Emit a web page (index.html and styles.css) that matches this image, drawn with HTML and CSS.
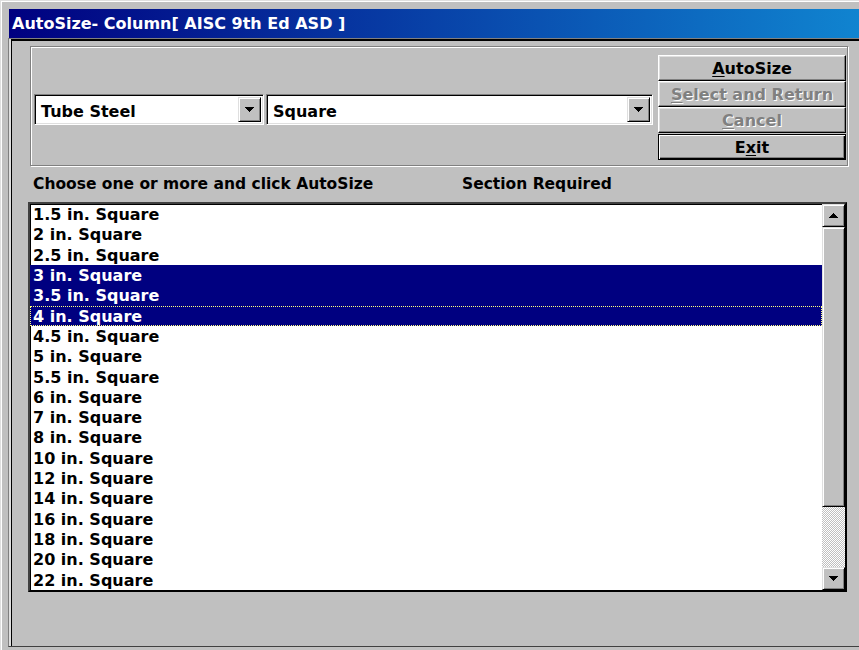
FILE: index.html
```html
<!DOCTYPE html>
<html lang="en">
<head>
<meta charset="utf-8">
<title>AutoSize- Column</title>
<link rel="stylesheet" href="styles.css">
</head>
<body>
<div class="window">
  <div class="titlebar"><span class="title">AutoSize- Column[ AISC 9th Ed ASD ]</span></div>
  <div class="client">
    <div class="panel">
      <div class="combos">
        <div class="combo combo-type">
          <span class="combo-value">Tube Steel</span>
          <span class="arrow-btn"><svg width="9" height="5" viewBox="0 0 9 5" shape-rendering="crispEdges"><path d="M0 0h9v1h-1v1h-1v1h-1v1h-1v1h-1v-1h-1v-1h-1v-1h-1v-1h-1z"/></svg></span>
        </div>
        <div class="combo combo-shape">
          <span class="combo-value">Square</span>
          <span class="arrow-btn"><svg width="9" height="5" viewBox="0 0 9 5" shape-rendering="crispEdges"><path d="M0 0h9v1h-1v1h-1v1h-1v1h-1v1h-1v-1h-1v-1h-1v-1h-1v-1h-1z"/></svg></span>
        </div>
      </div>
      <div class="actions">
        <button class="btn" type="button"><u>A</u>utoSize</button>
        <button class="btn" type="button" disabled><u>S</u>elect and Return</button>
        <button class="btn" type="button" disabled><u>C</u>ancel</button>
        <button class="btn btn-default" type="button">E<u>x</u>it</button>
      </div>
    </div>

    <div class="labels">
      <span class="label-choose">Choose one or more and click AutoSize</span>
      <span class="label-section">Section Required</span>
    </div>

    <div class="listbox">
      <ul class="items">
        <li>1.5 in. Square</li>
        <li>2 in. Square</li>
        <li>2.5 in. Square</li>
        <li class="selected">3 in. Square</li>
        <li class="selected">3.5 in. Square</li>
        <li class="selected focused">4 in. Square</li>
        <li>4.5 in. Square</li>
        <li>5 in. Square</li>
        <li>5.5 in. Square</li>
        <li>6 in. Square</li>
        <li>7 in. Square</li>
        <li>8 in. Square</li>
        <li>10 in. Square</li>
        <li>12 in. Square</li>
        <li>14 in. Square</li>
        <li>16 in. Square</li>
        <li>18 in. Square</li>
        <li>20 in. Square</li>
        <li>22 in. Square</li>
      </ul>
      <div class="scrollbar">
        <div class="sb-btn"><svg width="9" height="5" viewBox="0 0 9 5" shape-rendering="crispEdges"><path d="M4 0h1v1h1v1h1v1h1v1h1v1h-9v-1h1v-1h1v-1h1v-1h1z"/></svg></div>
        <div class="sb-thumb"></div>
        <div class="sb-track"></div>
        <div class="sb-btn"><svg width="9" height="5" viewBox="0 0 9 5" shape-rendering="crispEdges"><path d="M0 0h9v1h-1v1h-1v1h-1v1h-1v1h-1v-1h-1v-1h-1v-1h-1v-1h-1z"/></svg></div>
      </div>
    </div>
  </div>
</div>
</body>
</html>
```

FILE: styles.css
```css
* { box-sizing: border-box; }

html, body {
  margin: 0;
  padding: 0;
  height: 100%;
  overflow: hidden;
  background: #c0c0c0;
}

body {
  font-family: "DejaVu Sans", "Liberation Sans", sans-serif;
  font-weight: bold;
  font-size: 16px;
  color: #000;
}

/* outer window frame */
.window {
  width: 900px;
  height: 650px;
  padding: 8px 0 0 8px;
  background: #c0c0c0;
  border-top: 1px solid #dfdfdf;
  border-left: 1px solid #dfdfdf;
  box-shadow: inset 1px 1px 0 #fff;
  display: flex;
  flex-direction: column;
}

.titlebar {
  height: 29px;
  padding-left: 3px;
  display: flex;
  align-items: center;
  background: linear-gradient(to right, #000080 0, #1084d0 850px);
  color: #fff;
  font-size: 16px;
  white-space: nowrap;
}

/* sunken client area below the caption */
.client {
  height: 609px;
  margin-left: -1px;
  padding: 2px 0 0 3px;
  border-top: 1px solid #808080;
  border-left: 1px solid #808080;
  border-bottom: 1px solid #404040;
  box-shadow: inset 2px 0 0 #dfdfdf, inset 3px 0 0 #000, inset 0 2px 0 #000;
  display: flex;
  flex-direction: column;
}

/* etched group holding the pickers and the command buttons */
.panel {
  width: 818px;
  height: 120px;
  margin: 5px 0 0 18px;
  border: 1px solid #808080;
  box-shadow: inset 1px 1px 0 #fff, 1px 1px 0 #fff;
  display: flex;
}

.combos {
  display: flex;
  gap: 2px;
  margin: 47px 0 0 3px;
  height: 31px;
}

.combo {
  height: 31px;
  background: #fff;
  border: 1px solid;
  border-color: #808080 #fff #fff #808080;
  box-shadow: inset 1px 1px 0 #000, inset -1px -1px 0 #dfdfdf;
  padding: 2px 2px 2px 6px;
  display: flex;
  align-items: center;
}

.combo-type { width: 230px; }
.combo-shape { width: 387px; }

.combo-value {
  flex: 1;
  padding-top: 4px;
  white-space: nowrap;
}

.arrow-btn,
.sb-btn {
  background: #c0c0c0;
  border: 1px solid;
  border-color: #dfdfdf #000 #000 #dfdfdf;
  box-shadow: inset 1px 1px 0 #fff, inset -1px -1px 0 #808080;
  display: flex;
  align-items: center;
  justify-content: center;
}

.arrow-btn {
  width: 23px;
  height: 25px;
}

.arrow-btn svg,
.sb-btn svg { fill: #000; display: block; }

.actions {
  margin: 8px 1px 0 auto;
  width: 188px;
  display: flex;
  flex-direction: column;
}

.btn {
  height: 26px;
  padding: 2px 0 0;
  font: inherit;
  color: #000;
  background: #c0c0c0;
  border: 1px solid;
  border-color: #fff #000 #000 #fff;
  box-shadow: inset -1px -1px 0 #808080, inset 1px 1px 0 #dfdfdf;
  text-align: center;
  line-height: 22px;
}

.btn u { text-decoration-thickness: 1px; text-underline-offset: 2px; }

.btn:disabled {
  color: #808080;
  text-shadow: 1px 1px 0 #fff;
}

.btn-default {
  margin-top: 1px;
  border-color: #000;
  box-shadow: inset 1px 1px 0 #fff, inset -1px -1px 0 #000, inset -2px -2px 0 #808080;
}

.labels {
  height: 36px;
  padding-left: 21px;
  display: flex;
  align-items: center;
  white-space: nowrap;
  font-size: 15.5px;
}

.label-choose { width: 429px; }

/* multi-select list with vertical scrollbar */
.listbox {
  width: 819px;
  height: 390px;
  margin-left: 16px;
  border: 2px solid;
  border-color: #404040 #000 #000 #404040;
  box-shadow: inset 1px 1px 0 #000;
  background: #fff;
  display: flex;
}

.items {
  list-style: none;
  margin: 0;
  padding: 0;
  width: 792px;
}

.items li {
  height: 20.3158px;
  line-height: 19.3158px;
  padding: 1px 0 0 3px;
  white-space: nowrap;
}

.items li.selected {
  background: #000080;
  color: #fff;
}

.items li.focused {
  outline: 1px dotted #ffff80;
  outline-offset: -1px;
}

.scrollbar {
  width: 23px;
  display: flex;
  flex-direction: column;
}

.sb-btn { height: 23px; }

.sb-thumb {
  height: 280px;
  background: #c0c0c0;
  border: 1px solid;
  border-color: #dfdfdf #000 #000 #dfdfdf;
  box-shadow: inset 1px 1px 0 #fff, inset -1px -1px 0 #808080;
}

.sb-track {
  height: 60px;
  background-color: #c0c0c0;
  background-image:
    linear-gradient(45deg, #fff 25%, transparent 25%, transparent 75%, #fff 75%),
    linear-gradient(45deg, #fff 25%, transparent 25%, transparent 75%, #fff 75%);
  background-size: 2px 2px;
  background-position: 0 0, 1px 1px;
}
```
